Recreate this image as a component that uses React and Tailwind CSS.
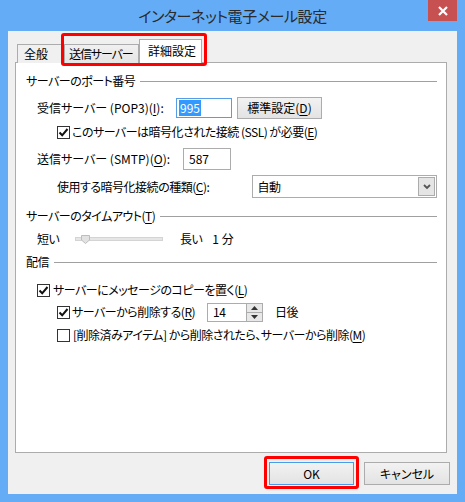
import React from "react";

const font = {
  fontFamily: '"Noto Sans CJK JP", "Noto Sans", sans-serif',
};

function U({ children }) {
  return <span className="underline underline-offset-[2px]">{children}</span>;
}

function Check({ checked }) {
  return (
    <span className="w-[13px] h-[13px] border border-[#333333] bg-white flex items-center justify-center shrink-0">
      {checked && (
        <svg width="11" height="11" viewBox="0 0 11 11">
          <path d="M1.5 5.5 L4.2 8.3 L9.5 2" fill="none" stroke="#111" strokeWidth="2" />
        </svg>
      )}
    </span>
  );
}

function GroupHeader({ children, className = "" }) {
  return (
    <div className={"flex items-center h-[16px] " + className}>
      <span className="whitespace-nowrap">{children}</span>
      <span className="flex-1 h-px bg-[#a0a0a0] ml-[5px]" />
    </div>
  );
}

function Btn({ children, className = "" }) {
  return (
    <div
      className={
        "flex items-center justify-center border bg-gradient-to-b from-[#f2f2f2] to-[#e3e3e3] " +
        className
      }
    >
      {children}
    </div>
  );
}

export default function App() {
  return (
    <div
      className="w-[465px] h-[502px] bg-[#64adf6] flex flex-col text-[12px] text-black [font-feature-settings:'palt'] leading-none"
      style={font}
    >
      {/* caption bar */}
      <div className="relative h-[31px] flex items-center justify-center shrink-0">
        <span className="text-[15px] text-[#2a2a2a] tracking-[-0.4px] mt-[-1px]">
          インターネット電子メール設定
        </span>
        <div className="absolute right-[8px] top-0 w-[29px] h-[21px] bg-[#c75050] flex items-center justify-center">
          <svg width="10" height="10" viewBox="0 0 10 10">
            <path d="M1 1 L9 9 M9 1 L1 9" stroke="#fff" strokeWidth="2.2" />
          </svg>
        </div>
      </div>

      {/* client area */}
      <div className="relative mx-[8px] mb-[8px] flex-1 bg-[#f0f0f0] flex flex-col pl-[7px] pr-[10px]">
        {/* tab strip */}
        <div className="flex items-end h-[31px] pl-[2px] relative z-10 whitespace-nowrap">
          <div className="shrink-0 w-[48px] h-[19px] pl-[6px] flex items-center border border-b-0 border-[#acacac] bg-[#f0f0f0] mb-[-1px] pb-[1px]">
            全般
          </div>
          <div className="shrink-0 w-[74px] h-[19px] pl-[4px] flex items-center overflow-hidden border border-b-0 border-l-0 border-[#acacac] bg-gradient-to-b from-[#f0f0f0] to-[#e5e5e5] mb-[-1px] pb-[1px] tracking-[-1.1px]">
            送信サーバー
          </div>
          <div className="shrink-0 w-[63px] h-[24px] pl-[8px] flex items-center border border-b-0 border-[#acacac] bg-white mb-[-1px] pb-[1px]">
            詳細設定
          </div>
        </div>

        {/* tab page */}
        <div className="h-[391px] border border-[#acacac] bg-white flex flex-col pl-[10px] pr-[9px] pt-[10px] tracking-[-0.5px]">
          <GroupHeader>サーバーのポート番号</GroupHeader>

          <div className="flex items-center h-[22px] mt-[8px] pl-[11px] tracking-normal">
            <span className="w-[139px] whitespace-nowrap">
              受信サーバー (POP3)(<U>I</U>):
            </span>
            <div className="w-[56px] h-[20px] border border-[#569de5] flex items-center pl-[2px]">
              <span className="bg-[#3399ff] text-white px-[1px] py-[2px]">995</span>
            </div>
            <Btn className="ml-[5px] w-[85px] h-[22px] border-[#acacac]">
              標準設定(<U>D</U>)
            </Btn>
          </div>

          <div className="flex items-center h-[16px] mt-[5px] pl-[31px]">
            <Check checked />
            <span className="ml-[2px] whitespace-nowrap">
              このサーバーは暗号化された接続 (SSL) が必要(<U>E</U>)
            </span>
          </div>

          <div className="flex items-center h-[22px] mt-[8px] pl-[11px] tracking-normal">
            <span className="w-[146px] whitespace-nowrap">
              送信サーバー (SMTP)(<U>O</U>):
            </span>
            <div className="w-[48px] h-[22px] border border-[#acacac] flex items-center pl-[5px]">
              587
            </div>
          </div>

          <div className="flex items-center h-[23px] mt-[5px] pl-[31px]">
            <span className="w-[196px] whitespace-nowrap">
              使用する暗号化接続の種類(<U>C</U>):
            </span>
            <div className="w-[185px] h-[23px] border border-[#acacac] flex items-center pl-[4px] pr-[1px]">
              <span className="flex-1">自動</span>
              <div className="w-[17px] h-[19px] border border-[#acacac] bg-[#e5e5e5] flex items-center justify-center">
                <svg width="8" height="6" viewBox="0 0 8 6">
                  <path d="M1 1 L4 4 L7 1" fill="none" stroke="#555" strokeWidth="1.8" />
                </svg>
              </div>
            </div>
          </div>

          <GroupHeader className="mt-[10px]">
            サーバーのタイムアウト(<U>T</U>)
          </GroupHeader>

          <div className="flex items-center h-[16px] mt-[7px] pl-[11px]">
            <span className="w-[38px]">短い</span>
            <div className="relative w-[88px] h-[4px] bg-[#e6e6e6] border border-[#d4d4d4]">
              <svg
                className="absolute left-[5px] top-[-3px]"
                width="9"
                height="9"
                viewBox="0 0 9 9"
              >
                <path d="M0.5 0.5 H8.5 V5 L4.5 8.5 L0.5 5 Z" fill="#e2e2e2" stroke="#bdbdbd" />
              </svg>
            </div>
            <span className="ml-[17px]">長い</span>
            <span className="ml-[10px] tracking-normal">1 分</span>
          </div>

          <GroupHeader className="mt-[7px]">配信</GroupHeader>

          <div className="flex items-center h-[16px] mt-[12px] pl-[11px]">
            <Check checked />
            <span className="ml-[3px] whitespace-nowrap">
              サーバーにメッセージのコピーを置く(<U>L</U>)
            </span>
          </div>

          <div className="flex items-center h-[18px] mt-[5px] pl-[31px]">
            <Check checked />
            <span className="ml-[2px] w-[135px] whitespace-nowrap">
              サーバーから削除する(<U>R</U>)
            </span>
            <div className="w-[56px] h-[19px] border border-[#acacac] flex items-center">
              <span className="flex-1 pl-[5px]">14</span>
              <div className="w-[16px] h-[17px] flex flex-col border-l border-[#acacac]">
                <div className="flex-1 bg-[#e8e8e8] border-b border-[#acacac] flex items-center justify-center">
                  <svg width="7" height="4" viewBox="0 0 7 4">
                    <path d="M0 4 L3.5 0 L7 4 Z" fill="#333" />
                  </svg>
                </div>
                <div className="flex-1 bg-[#e8e8e8] flex items-center justify-center">
                  <svg width="7" height="4" viewBox="0 0 7 4">
                    <path d="M0 0 L3.5 4 L7 0 Z" fill="#333" />
                  </svg>
                </div>
              </div>
            </div>
            <span className="ml-[12px]">日後</span>
          </div>

          <div className="flex items-center h-[16px] mt-[6px] pl-[31px]">
            <Check />
            <span className="ml-[3px] whitespace-nowrap">
              [削除済みアイテム] から削除されたら、サーバーから削除(<U>M</U>)
            </span>
          </div>
        </div>

        {/* dialog buttons */}
        <div className="flex justify-end mt-[9px] gap-[10px] mr-[-3px]">
          <Btn className="w-[85px] h-[23px] border-[#4a9be8]">OK</Btn>
          <Btn className="w-[86px] h-[23px] border-[#acacac]">キャンセル</Btn>
        </div>

        {/* red call-out frames */}
        <div className="absolute left-[53px] top-[2px] w-[146px] h-[33px] border-[3px] border-[#ff0000] rounded-[3px] z-20 pointer-events-none" />
        <div className="absolute left-[256px] top-[425px] w-[95px] h-[33px] border-[3px] border-[#ff0000] rounded-[3px] z-20 pointer-events-none" />
      </div>
    </div>
  );
}
